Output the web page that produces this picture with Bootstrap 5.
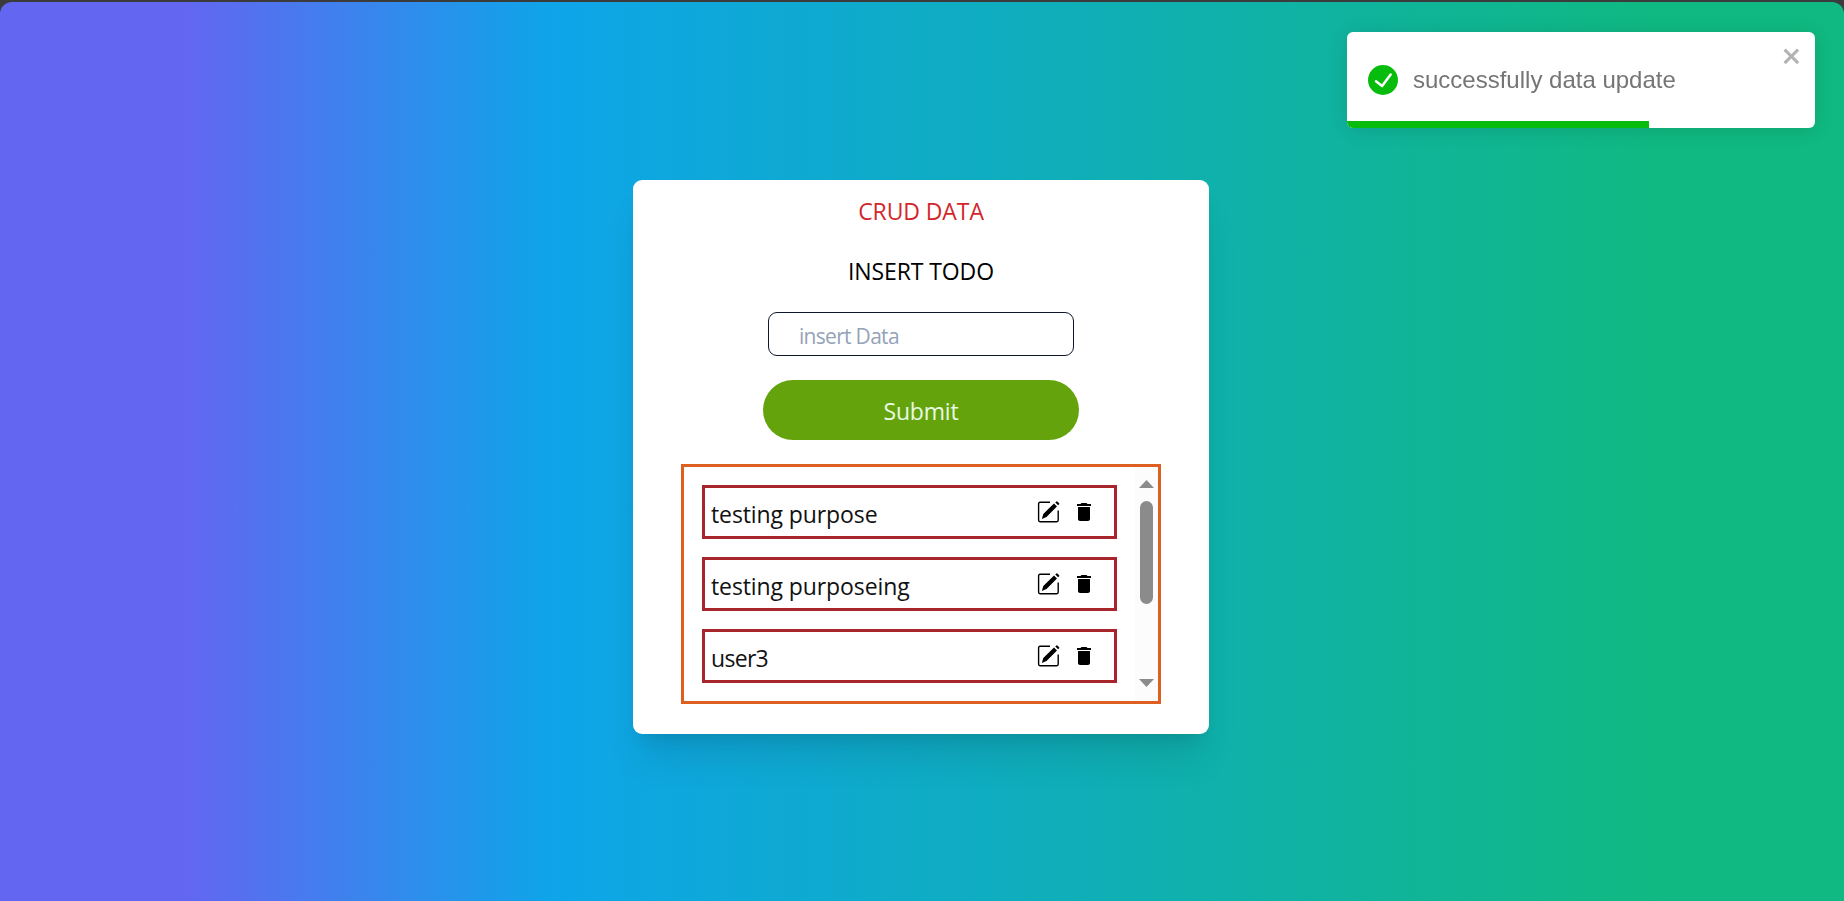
<!DOCTYPE html>
<html lang="en">
<head>
<meta charset="utf-8">
<meta name="viewport" content="width=device-width, initial-scale=1">
<title>CRUD Data</title>
<link href="https://cdn.jsdelivr.net/npm/bootstrap@5.3.0/dist/css/bootstrap.min.css" rel="stylesheet">
<style>
  body { background: #3b3b3b; font-family: "Open Sans", "Noto Sans", sans-serif; font-size: 23px; line-height: 36px; color: #000; padding-top: 2px; }
  .page { height: calc(100vh - 2px); border-radius: 12px 12px 0 0; padding-top: 178px;
    background: linear-gradient(to right, #6366f1 10%, #0ea5e9 30%, #10b981 90%); }
  .panel { width: 576px; height: 554px; margin-left: 633px; border-radius: 9px; padding-top: 13px;
    box-shadow: 0 30px 37px -7px rgba(0,0,0,.1), 0 12px 15px -9px rgba(0,0,0,.1); }
  .title { color: #d3262b; letter-spacing: -.1px; margin-bottom: 24px; }
  .subtitle { letter-spacing: -.1px; margin-bottom: 23px; }
  .todo-input { width: 306px; height: 44px; border: 1px solid #0f172a; border-radius: 9px; padding: 3px 30px 0; font-size: 21px; letter-spacing: -.7px; margin-bottom: 24px; }
  .todo-input::placeholder { color: #94a3b8; opacity: 1; }
  .submit { width: 316px; height: 60px; padding: 2px 0 0; font-size: 23px; letter-spacing: -.2px; border: 0; margin-bottom: 24px; }
  .submit, .submit:hover { color: #e8fbe4; background: #65a30d; }
  .list-box { width: 480px; height: 240px; border: 3px solid #dd6020; overflow: hidden; }
  .entries { padding: 18px 18px 0; gap: 18px; }
  .entry { height: 54px; border: 3px solid #a8262b; padding: 0 18px 0 6px; }
  .entry-text { letter-spacing: -.1px; color: #111; padding-top: 3px; }
  .entry:last-child .entry-text { letter-spacing: -.7px; }
  .icons { gap: 12px; }
  .icons svg { display: block; }
  .scroller { width: 23px; background: #fcfcfc; padding: 13px 0 14px; }
  .thumb { width: 13px; height: 103px; border-radius: 7px; background: #8b8b8b; margin-top: 13px; }
  .note { top: 32px; right: 29px; width: 468px; height: 96px; border-radius: 6px; padding: 0 21px;
    font: 24px/30px "Liberation Sans", Arial, sans-serif; color: #757575; box-shadow: 0 2px 20px rgba(0,0,0,.12); }
  .note-text { margin-left: 15px; }
  .note-close { top: 12px; right: 12px; line-height: 0; }
  .note-bar { left: 0; bottom: 0; height: 7px; background: #07bc0c; border-bottom-left-radius: 6px; }
</style>
</head>
<body>
<svg width="0" height="0" class="position-absolute">
  <symbol id="edit" viewBox="0 0 24 24">
    <path d="M14 2.3H4a1.4 1.4 0 0 0-1.4 1.4v16.6A1.4 1.4 0 0 0 4 21.7h16.8a1.4 1.4 0 0 0 1.4-1.4V10.5" fill="none" stroke="#000" stroke-width="1.4"/>
    <path d="M18 3.4l3 3L10.5 17 5.8 18.9l1.5-5zM19.3 2.4l1-1q.5-.4 1 0l1.8 1.8q.4.5 0 1l-1 1z"/>
  </symbol>
  <symbol id="trash" viewBox="0 0 24 24">
    <path d="M6 19c0 1.1.9 2 2 2h8c1.1 0 2-.9 2-2V7H6v12zM19 4h-3.5l-1-1h-5l-1 1H5v2h14V4z"/>
  </symbol>
</svg>

<main class="page">
  <section class="panel bg-white d-flex flex-column align-items-center">
    <div class="title">CRUD DATA</div>
    <div class="subtitle">INSERT TODO</div>
    <input class="todo-input" type="text" placeholder="insert Data">
    <button class="btn submit rounded-pill" type="button">Submit</button>
    <div class="list-box d-flex">
      <div class="entries d-flex flex-column flex-grow-1">
        <div class="entry flex-shrink-0 d-flex align-items-center">
          <span class="entry-text me-auto">testing purpose</span>
          <span class="icons d-flex"><svg width="24" height="24"><use href="#edit"/></svg><svg width="24" height="24"><use href="#trash"/></svg></span>
        </div>
        <div class="entry flex-shrink-0 d-flex align-items-center">
          <span class="entry-text me-auto">testing purposeing</span>
          <span class="icons d-flex"><svg width="24" height="24"><use href="#edit"/></svg><svg width="24" height="24"><use href="#trash"/></svg></span>
        </div>
        <div class="entry flex-shrink-0 d-flex align-items-center">
          <span class="entry-text me-auto">user3</span>
          <span class="icons d-flex"><svg width="24" height="24"><use href="#edit"/></svg><svg width="24" height="24"><use href="#trash"/></svg></span>
        </div>
      </div>
      <div class="scroller d-flex flex-column align-items-center">
        <svg width="15" height="8" class="flex-shrink-0"><path d="M0 8L7.5 0 15 8z" fill="#8b8b8b"/></svg>
        <div class="thumb"></div>
        <svg width="15" height="8" class="flex-shrink-0 mt-auto"><path d="M0 0L7.5 8 15 0z" fill="#8b8b8b"/></svg>
      </div>
    </div>
  </section>
</main>

<div class="note position-fixed bg-white d-flex align-items-center">
  <svg width="30" height="30" viewBox="0 0 24 24" fill="#07bc0c"><path d="M12 0a12 12 0 1012 12A12.014 12.014 0 0012 0zm6.927 8.2l-6.845 9.289a1.011 1.011 0 01-1.43.188l-4.888-3.908a1 1 0 111.25-1.562l4.076 3.261 6.227-8.451a1 1 0 111.61 1.183z"/></svg>
  <span class="note-text">successfully data update</span>
  <span class="note-close position-absolute"><svg width="21" height="24" viewBox="0 0 14 16" fill="#b3b3b3"><path d="M7.71 8.23l3.75 3.75-1.48 1.48-3.75-3.75-3.75 3.75L1 11.98l3.75-3.75L1 4.48 2.48 3l3.75 3.75L9.98 3l1.48 1.48-3.75 3.75z"/></svg></span>
  <div class="note-bar position-absolute" style="width:302px"></div>
</div>
<script src="https://cdn.jsdelivr.net/npm/bootstrap@5.3.0/dist/js/bootstrap.bundle.min.js"></script>
</body>
</html>
